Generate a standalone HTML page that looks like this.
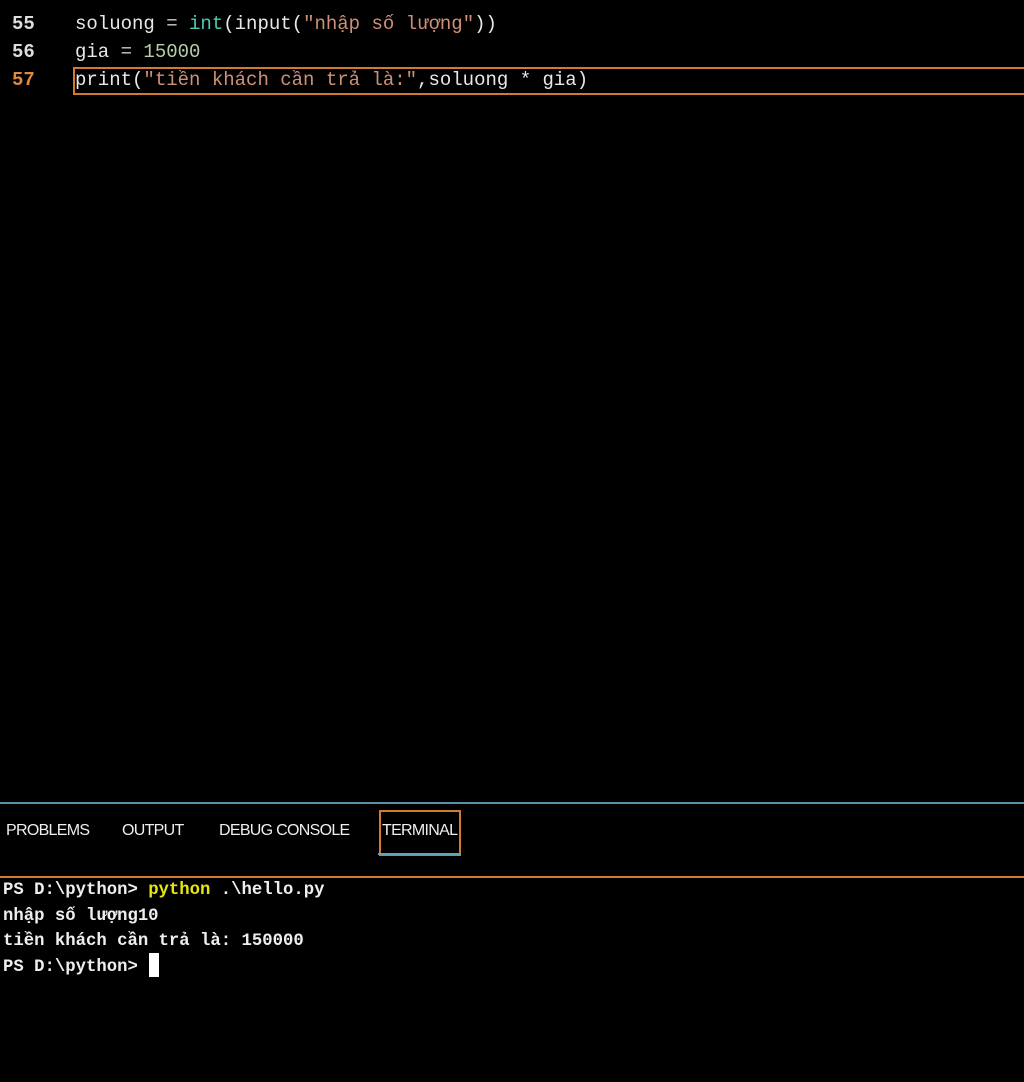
<!DOCTYPE html>
<html><head><meta charset="utf-8"><style>
body{margin:0;width:1024px;height:1082px;background:#000;position:relative;overflow:hidden;font-family:"Liberation Mono",monospace;color:#e8e8e8}
.l{position:absolute;font-size:19px;line-height:28px;white-space:pre}
.n{position:absolute;left:12px;font-size:19px;line-height:28px;color:#ddd;font-weight:bold}
.t{position:absolute;font-family:"Liberation Sans",sans-serif;font-size:16px;color:#eee;top:822px;letter-spacing:-0.7px}
.term{position:absolute;left:3px;font-size:17.3px;line-height:25.5px;white-space:pre;color:#eee;font-weight:bold}
</style></head><body>
<div class="n" style="top:-20px">54</div>
<div class="n" style="top:10px">55</div>
<div class="l" style="left:75px;top:10px">soluong <span style="color:#ccc">=</span> <span style="color:#4ec9b0">int</span>(input(<span style="color:#ce9178">"nhập số lượng"</span>))</div>
<div class="n" style="top:38px">56</div>
<div class="l" style="left:75px;top:38px">gia <span style="color:#ccc">=</span> <span style="color:#b5cea8">15000</span></div>
<div style="position:absolute;left:73px;top:67px;width:960px;height:24px;border:2px solid #d27a2e"></div>
<div class="n" style="top:66px;color:#e08a3c">57</div>
<div class="l" style="left:75px;top:66px">print(<span style="color:#ce9178">"tiền khách cần trả là:"</span>,soluong * gia)</div>
<div style="position:absolute;left:0;top:802px;width:1024px;height:2px;background:#5a8fa8"></div>
<div class="t" style="left:6px">PROBLEMS</div>
<div class="t" style="left:122px">OUTPUT</div>
<div class="t" style="left:219px">DEBUG CONSOLE</div>
<div style="position:absolute;left:379px;top:810px;width:78px;height:42px;border:2px solid #d27a2e"></div>
<div style="position:absolute;left:378px;top:853px;width:83px;height:2px;background:#6a9fb8"></div>
<div class="t" style="left:382px">TERMINAL</div>
<div style="position:absolute;left:0;top:876px;width:1024px;height:2px;background:#d27a2e"></div>
<div class="term" style="top:878px">PS D:\python&gt; <span style="color:#e5e510">python</span> .\hello.py</div>
<div class="term" style="top:903.5px">nhập số lượng10</div>
<div class="term" style="top:929px">tiền khách cần trả là: 150000</div>
<div class="term" style="top:954.5px">PS D:\python&gt; </div>
<div style="position:absolute;left:149px;top:953px;width:10px;height:24px;background:#fff"></div>
</body></html>
